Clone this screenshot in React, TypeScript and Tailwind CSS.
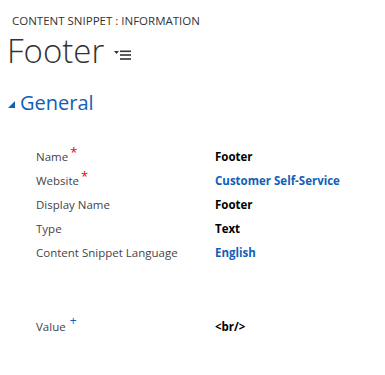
import React from 'react';

const rows: { label: string; mark?: '*' | '+'; value: string; link?: boolean }[] = [
  { label: 'Name', mark: '*', value: 'Footer' },
  { label: 'Website', mark: '*', value: 'Customer Self-Service', link: true },
  { label: 'Display Name', value: 'Footer' },
  { label: 'Type', value: 'Text' },
  { label: 'Content Snippet Language', value: 'English', link: true },
];

const Row = ({ label, mark, value, link }: { label: string; mark?: '*' | '+'; value: string; link?: boolean }) => (
  <div className="flex items-center h-6">
    <div className="w-[179px] text-[11.5px] text-[#444] flex items-start">
      <span>{label}</span>
      {mark === '*' && <span className="text-[#e00] text-[13px] leading-none ml-[2px] -mt-[2px]">*</span>}
      {mark === '+' && <span className="text-[#1160b7] text-[12px] leading-none ml-[4px] -mt-[3px]">+</span>}
    </div>
    <div className={`text-[11.5px] font-bold ${link ? 'text-[#1160b7]' : 'text-black'}`}>{value}</div>
  </div>
);

export default function App() {
  return (
    <div className="w-[385px] h-[375px] bg-white" style={{ fontFamily: '"Open Sans", "Noto Sans", sans-serif' }}>
      <div className="pl-[12px] pt-[13px] text-[11.5px] leading-4 text-[#333]">CONTENT SNIPPET : INFORMATION</div>
      <div className="flex items-start pl-[7px]">
        <h1 className="text-[33px] leading-[44px] font-light text-[#333]">Footer</h1>
        <svg width="17" height="11" viewBox="0 0 17 11" className="ml-[10px] mt-[21px]">
          <polygon points="0,1 5,1 2.5,4" fill="#333" />
          <rect x="6" y="0.5" width="11" height="1.6" fill="#333" />
          <rect x="6" y="4.2" width="11" height="1.6" fill="#333" />
          <rect x="6" y="8.2" width="11" height="1.6" fill="#333" />
        </svg>
      </div>
      <div className="flex items-center pl-[8px] mt-[16px]">
        <svg width="7" height="7" viewBox="0 0 7 7" className="mt-[2px]">
          <polygon points="7,0 7,7 0,7" fill="#1160b7" />
        </svg>
        <h2 className="ml-[5px] text-[20px] leading-7 text-[#1160b7]">General</h2>
      </div>
      <div className="pl-[36px] mt-[28px]">
        {rows.map((r) => (
          <Row key={r.label} {...r} />
        ))}
        <div className="h-[50px]" />
        <Row label="Value" mark="+" value="<br/>" />
      </div>
    </div>
  );
}
